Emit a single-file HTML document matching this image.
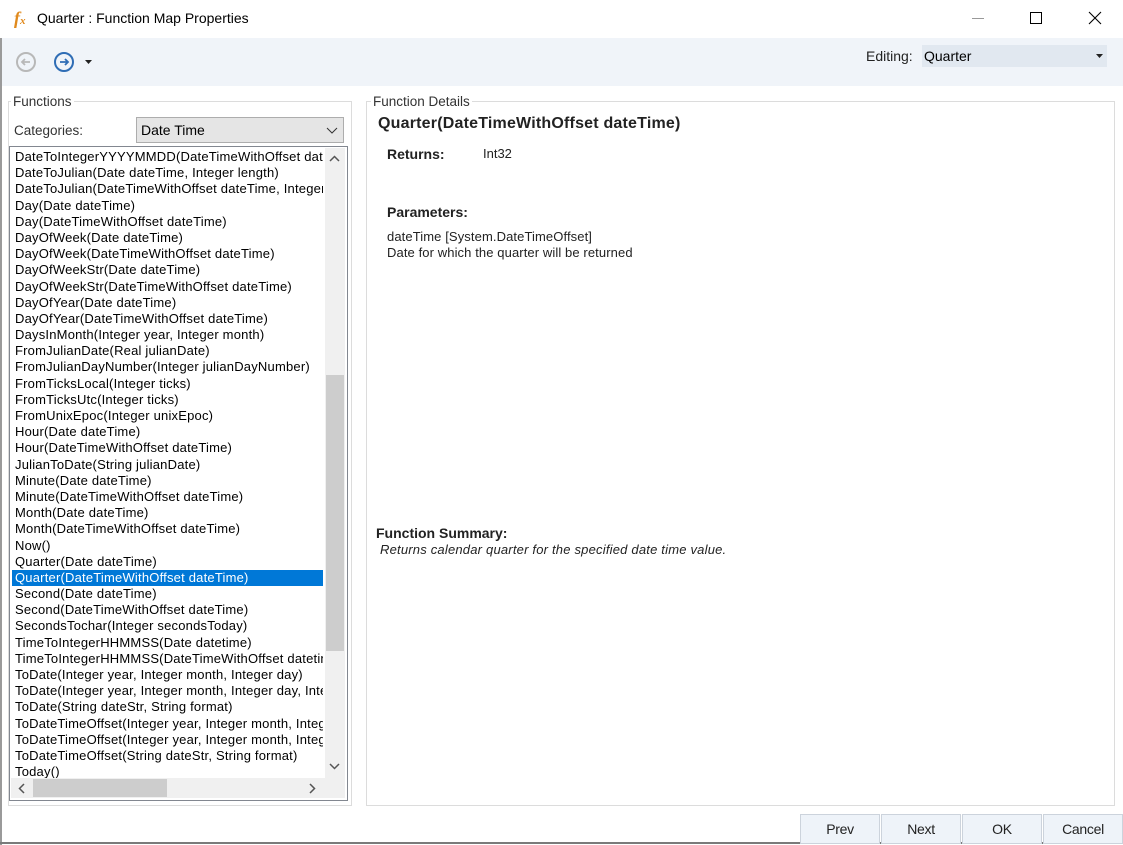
<!DOCTYPE html>
<html><head><style>
*{margin:0;padding:0;box-sizing:border-box}
body{width:1123px;height:845px;background:#fff;font-family:"Liberation Sans",sans-serif;font-size:13px;color:#000;position:relative;overflow:hidden}
.a{position:absolute}
.list div{height:16.2px;line-height:16px;white-space:nowrap;padding-left:3px;letter-spacing:0.2px}
.sel{background:#0078d7;color:#fff}
.btn{position:absolute;top:814px;height:30px;width:80px;background:#eef3f9;border:1px solid #ccd3dc;text-align:center;line-height:28px;font-size:14px;color:#222;letter-spacing:-0.3px}
</style></head><body>
<div class="a" style="left:0;top:38px;width:2px;height:807px;background:#9a9a9a"></div>
<div class="a" style="left:0;top:842px;width:1123px;height:2px;background:#7a7a7a"></div>
<div class="a" style="left:14px;top:8px;font-family:'Liberation Serif',serif;font-style:italic;font-weight:bold;color:#e08a1e;font-size:18px">f<span style="font-size:11px">x</span></div>
<div class="a" style="left:37px;top:10px;font-size:14px">Quarter : Function Map Properties</div>
<div class="a" style="left:972px;top:18px;width:12px;height:1px;background:#999"></div>
<div class="a" style="left:1030px;top:12px;width:12px;height:12px;border:1px solid #000"></div>
<svg class="a" style="left:1088px;top:11px" width="14" height="14"><path d="M1 1L13 13M13 1L1 13" stroke="#000" stroke-width="1.1"/></svg>
<div class="a" style="left:2px;top:38px;width:1121px;height:48px;background:#f0f4f9"></div>
<svg class="a" style="left:15px;top:51px" width="22" height="22"><circle cx="11" cy="11" r="9" fill="none" stroke="#b8b8b8" stroke-width="2"/><path d="M15 11H7M10 8L7 11L10 14" stroke="#b8b8b8" stroke-width="1.8" fill="none"/></svg>
<svg class="a" style="left:53px;top:51px" width="22" height="22"><circle cx="11" cy="11" r="9" fill="none" stroke="#2f6db5" stroke-width="2"/><path d="M7 11H15M12 8L15 11L12 14" stroke="#2f6db5" stroke-width="1.8" fill="none"/></svg>
<svg class="a" style="left:85px;top:60px" width="7" height="4"><path d="M0 0H7L3.5 4Z" fill="#222"/></svg>
<div class="a" style="left:866px;top:48px;font-size:14px;color:#222">Editing:</div>
<div class="a" style="left:922px;top:45px;width:185px;height:22px;background:#e1e8f0;font-size:14px;line-height:22px;padding-left:2px">Quarter</div>
<svg class="a" style="left:1096px;top:54px" width="7" height="4"><path d="M0 0H7L3.5 4Z" fill="#222"/></svg>

<div class="a" style="left:8px;top:101px;width:344px;height:705px;border:1px solid #dcdcdc"></div>
<div class="a" style="left:11px;top:94px;background:#fff;padding:0 2px;color:#333;font-size:13.5px">Functions</div>
<div class="a" style="left:14px;top:123px;color:#333;font-size:13.5px">Categories:</div>
<div class="a" style="left:136px;top:117px;width:208px;height:26px;background:#e5e5e5;border:1px solid #adadad;line-height:24px;padding-left:4px;font-size:14px">Date Time</div>
<svg class="a" style="left:326px;top:127px" width="12" height="7"><path d="M1 1L6 6L11 1" stroke="#333" fill="none"/></svg>
<div class="a" style="left:9px;top:146px;width:339px;height:655px;border:1px solid #828790;background:#fff"></div>
<div class="a list" style="left:12px;top:149px;width:311px;height:629px;overflow:hidden">
<div>DateToIntegerYYYYMMDD(DateTimeWithOffset dateTime)</div>
<div>DateToJulian(Date dateTime, Integer length)</div>
<div>DateToJulian(DateTimeWithOffset dateTime, Integer length)</div>
<div>Day(Date dateTime)</div>
<div>Day(DateTimeWithOffset dateTime)</div>
<div>DayOfWeek(Date dateTime)</div>
<div>DayOfWeek(DateTimeWithOffset dateTime)</div>
<div>DayOfWeekStr(Date dateTime)</div>
<div>DayOfWeekStr(DateTimeWithOffset dateTime)</div>
<div>DayOfYear(Date dateTime)</div>
<div>DayOfYear(DateTimeWithOffset dateTime)</div>
<div>DaysInMonth(Integer year, Integer month)</div>
<div>FromJulianDate(Real julianDate)</div>
<div>FromJulianDayNumber(Integer julianDayNumber)</div>
<div>FromTicksLocal(Integer ticks)</div>
<div>FromTicksUtc(Integer ticks)</div>
<div>FromUnixEpoc(Integer unixEpoc)</div>
<div>Hour(Date dateTime)</div>
<div>Hour(DateTimeWithOffset dateTime)</div>
<div>JulianToDate(String julianDate)</div>
<div>Minute(Date dateTime)</div>
<div>Minute(DateTimeWithOffset dateTime)</div>
<div>Month(Date dateTime)</div>
<div>Month(DateTimeWithOffset dateTime)</div>
<div>Now()</div>
<div>Quarter(Date dateTime)</div>
<div class="sel">Quarter(DateTimeWithOffset dateTime)</div>
<div>Second(Date dateTime)</div>
<div>Second(DateTimeWithOffset dateTime)</div>
<div>SecondsTochar(Integer secondsToday)</div>
<div>TimeToIntegerHHMMSS(Date datetime)</div>
<div>TimeToIntegerHHMMSS(DateTimeWithOffset datetime)</div>
<div>ToDate(Integer year, Integer month, Integer day)</div>
<div>ToDate(Integer year, Integer month, Integer day, Integer hour)</div>
<div>ToDate(String dateStr, String format)</div>
<div>ToDateTimeOffset(Integer year, Integer month, Integer day)</div>
<div>ToDateTimeOffset(Integer year, Integer month, Integer day)</div>
<div>ToDateTimeOffset(String dateStr, String format)</div>
<div>Today()</div>
</div>
<div class="a" style="left:325px;top:148px;width:20px;height:630px;background:#f0f0f0"></div>
<div class="a" style="left:326px;top:375px;width:18px;height:276px;background:#cdcdcd"></div>
<svg class="a" style="left:329px;top:155px" width="11" height="7"><path d="M1 6L5.5 1.5L10 6" stroke="#555" stroke-width="1.5" fill="none"/></svg>
<svg class="a" style="left:329px;top:763px" width="11" height="7"><path d="M1 1L5.5 5.5L10 1" stroke="#555" stroke-width="1.5" fill="none"/></svg>
<div class="a" style="left:11px;top:778px;width:334px;height:20px;background:#f0f0f0"></div>
<div class="a" style="left:33px;top:779px;width:134px;height:18px;background:#cdcdcd"></div>
<svg class="a" style="left:18px;top:783px" width="7" height="11"><path d="M6 1L1.5 5.5L6 10" stroke="#555" stroke-width="1.5" fill="none"/></svg>
<svg class="a" style="left:309px;top:783px" width="7" height="11"><path d="M1 1L5.5 5.5L1 10" stroke="#555" stroke-width="1.5" fill="none"/></svg>

<div class="a" style="left:366px;top:101px;width:749px;height:705px;border:1px solid #dcdcdc"></div>
<div class="a" style="left:371px;top:94px;background:#fff;padding:0 2px;color:#333;font-size:13.5px">Function Details</div>
<div class="a" style="left:378px;top:115px;font-weight:bold;font-size:16px;color:#222;letter-spacing:0.2px">Quarter(DateTimeWithOffset dateTime)</div>
<div class="a" style="left:387px;top:146px;font-weight:bold;color:#222;font-size:14px">Returns:</div>
<div class="a" style="left:483px;top:146px;color:#222">Int32</div>
<div class="a" style="left:387px;top:204px;font-weight:bold;color:#222;font-size:14px">Parameters:</div>
<div class="a" style="left:387px;top:229px;color:#222;letter-spacing:0.1px;line-height:16px">dateTime [System.DateTimeOffset]<br>Date for which the quarter will be returned</div>
<div class="a" style="left:376px;top:525px;font-weight:bold;color:#222;font-size:14px">Function Summary:</div>
<div class="a" style="left:380px;top:542px;font-style:italic;color:#222;letter-spacing:0.2px">Returns calendar quarter for the specified date time value.</div>

<div class="btn" style="left:800px">Prev</div>
<div class="btn" style="left:881px">Next</div>
<div class="btn" style="left:962px">OK</div>
<div class="btn" style="left:1043px">Cancel</div>
</body></html>
